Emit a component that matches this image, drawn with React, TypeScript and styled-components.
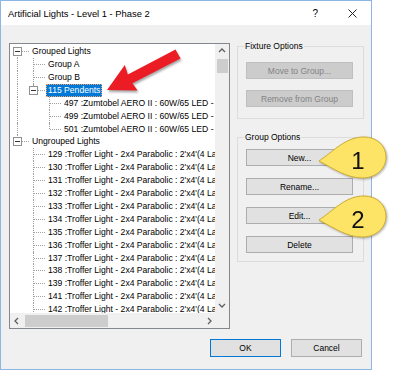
import React from 'react'
import styled, { createGlobalStyle } from 'styled-components'

const GlobalStyle = createGlobalStyle`
  html, body {
    margin: 0;
    padding: 0;
    background: #fff;
  }
  body {
    font-family: "Liberation Sans", Arial, sans-serif;
    color: #000;
  }
`

const Dialog = styled.div`
  position: relative;
  width: 372px;
  height: 370px;
  box-sizing: border-box;
  border: 1px solid #8db6e6;
  background: #f0f0f0;
  display: flex;
  flex-direction: column;
`

const TitleBar = styled.div`
  flex: none;
  height: 24px;
  background: #fff;
  display: flex;
  align-items: center;
  padding-left: 7px;
  font-size: 9.4px;
`

const TitleText = styled.span`
  flex: 1;
`

const Help = styled.span`
  font-size: 10px;
  margin-right: 30px;
`

const Close = styled.span`
  display: flex;
  margin-right: 14px;
`

const Body = styled.div`
  display: flex;
  gap: 7px;
  padding: 15px 0 0 8px;
`

const Tree = styled.div`
  margin-top: 3px;
  width: 221px;
  height: 286px;
  box-sizing: border-box;
  border: 1px solid #828790;
  background: #fff;
  display: grid;
  grid-template-columns: minmax(0, 1fr) 14px;
  grid-template-rows: minmax(0, 1fr) 15px;
`

const Rows = styled.div`
  min-height: 0;
  padding-top: 1.25px;
  overflow: hidden;
`

const Row = styled.div`
  height: 12.9px;
  display: flex;
  white-space: nowrap;
`

const Guide = styled.span<{ $up?: boolean; $down?: boolean; $right?: boolean; $wide?: boolean }>`
  position: relative;
  flex: none;
  width: ${(p) => (p.$wide ? 20 : 16)}px;

  &::before {
    content: '';
    display: ${(p) => (p.$up || p.$down ? 'block' : 'none')};
    position: absolute;
    left: 7px;
    top: ${(p) => (p.$up ? '0' : '50%')};
    bottom: ${(p) => (p.$down ? '0' : '50%')};
    border-left: 1px dotted #a0a0a0;
  }

  &::after {
    content: '';
    display: ${(p) => (p.$right ? 'block' : 'none')};
    position: absolute;
    left: 8px;
    right: 1px;
    top: 6px;
    border-top: 1px dotted #a0a0a0;
  }
`

const Expander = styled.span`
  position: absolute;
  z-index: 1;
  left: 3px;
  top: 2px;
  width: 9px;
  height: 9px;
  box-sizing: border-box;
  border: 1px solid #919191;
  background: #fff;

  &::after {
    content: '';
    position: absolute;
    left: 1px;
    right: 1px;
    top: 3px;
    border-top: 1px solid #333;
  }
`

const Label = styled.span<{ $selected?: boolean }>`
  padding: 0 2px;
  font-size: 8.6px;
  line-height: 12.9px;
  background: ${(p) => (p.$selected ? '#0078d7' : 'transparent')};
  color: ${(p) => (p.$selected ? '#fff' : '#000')};
  outline: ${(p) => (p.$selected ? '1px dotted #f3a06a' : 'none')};
  outline-offset: -1px;
`

const VScroll = styled.div`
  min-height: 0;
  background: #f0f0f0;
  display: flex;
  flex-direction: column;
`

const HScroll = styled.div`
  background: #f0f0f0;
  display: flex;
`

const Corner = styled.div`
  background: #f0f0f0;
`

const VArrow = styled.span`
  flex: none;
  height: 14px;
  display: flex;
  align-items: center;
  justify-content: center;
`

const HArrow = styled.span<{ $end?: boolean }>`
  flex: none;
  width: 14px;
  display: flex;
  align-items: center;
  justify-content: ${(p) => (p.$end ? 'flex-end' : 'center')};
  padding-right: ${(p) => (p.$end ? '1px' : '0')};
  box-sizing: border-box;
`

const VThumb = styled.div`
  flex: none;
  height: 14px;
  margin: 1px 1px 0 2px;
  background: #cdcdcd;
`

const HThumb = styled.div`
  flex: none;
  width: 83px;
  margin: 2px 0 1px 1px;
  background: #cdcdcd;
`

const Track = styled.div`
  flex: 1;
`

const Side = styled.div`
  width: 127px;
  display: flex;
  flex-direction: column;
  gap: 12px;
`

const Group = styled.fieldset<{ $top: number; $gap: number; $bottom: number }>`
  margin: 0;
  min-width: 0;
  border: 1px solid #dcdcdc;
  padding: ${(p) => p.$top}px 10px ${(p) => p.$bottom}px 8px;
  display: flex;
  flex-direction: column;
  gap: ${(p) => p.$gap}px;
`

const Legend = styled.legend`
  font-size: 8.5px;
  line-height: 13px;
  padding: 0 1px;
  margin-left: -2px;
`

const Button = styled.button<{ $primary?: boolean }>`
  height: 17px;
  box-sizing: border-box;
  padding: 0;
  border: 1px solid ${(p) => (p.$primary ? '#0078d7' : '#adadad')};
  background: #e1e1e1;
  font-family: "Liberation Sans", Arial, sans-serif;
  font-size: 8.5px;
  color: #000;

  &:disabled {
    background: #cccccc;
    border-color: #bfbfbf;
    color: #838383;
  }
`

const Footer = styled.div`
  display: flex;
  justify-content: flex-end;
  gap: 10px;
  padding: 10px 9px 0 0;
`

const FooterButton = styled(Button)`
  width: 71px;
  height: 18px;
`

const Pointer = styled.svg`
  position: absolute;
  left: 99px;
  top: 42px;
  filter: drop-shadow(1px 2px 1px rgba(0, 0, 0, 0.35));
`

const Callout = styled.svg<{ $top: number }>`
  position: absolute;
  left: 313px;
  top: ${(p) => p.$top}px;
  filter: drop-shadow(1px 1px 1px rgba(0, 0, 0, 0.3));
`

type Cell = { up?: boolean; down?: boolean; right?: boolean; box?: boolean }
type Item = { cells: Cell[]; text: string; selected?: boolean }

const pipe: Cell = { up: true, down: true }
const blank: Cell = {}
const tee: Cell = { up: true, down: true, right: true }
const elbow: Cell = { up: true, right: true }

const troffer = [129, 130, 131, 132, 133, 134, 135, 136, 137, 138, 139, 141, 142]

const items: Item[] = [
  { cells: [{ down: true, right: true, box: true }], text: 'Grouped Lights' },
  { cells: [pipe, tee], text: 'Group A' },
  { cells: [pipe, tee], text: 'Group B' },
  { cells: [pipe, { up: true, right: true, box: true }], text: '115 Pendents', selected: true },
  { cells: [pipe, blank, tee], text: '497 :Zumtobel AERO II : 60W/65 LED -' },
  { cells: [pipe, blank, tee], text: '499 :Zumtobel AERO II : 60W/65 LED -' },
  { cells: [pipe, blank, elbow], text: '501 :Zumtobel AERO II : 60W/65 LED -' },
  { cells: [{ up: true, right: true, box: true }], text: 'Ungrouped Lights' },
  ...troffer.map((n) => ({
    cells: [blank, tee],
    text: `${n} :Troffer Light - 2x4 Parabolic : 2'x4'(4 La`,
  })),
]

const Chevron = ({ dir }: { dir: 'up' | 'down' | 'left' | 'right' }) => {
  const d = {
    up: 'M1 5 L4 2 L7 5',
    down: 'M1 2 L4 5 L7 2',
    left: 'M5 1 L2 4 L5 7',
    right: 'M2 1 L5 4 L2 7',
  }[dir]
  return (
    <svg width="8" height="8" viewBox="0 0 8 8">
      <path d={d} fill="none" stroke="#606060" strokeWidth="1.3" />
    </svg>
  )
}

// teardrop pointing left, bulb on the right
const calloutPath = 'M5 29 C19 20 31 5 50 5 C63 5 72 14 72 25 C72 37 62 46 48 46 C33 46 20 37 5 29 Z'

const Bubble = ({ top, label }: { top: number; label: string }) => (
  <Callout $top={top} width="78" height="54" viewBox="0 0 78 54">
    <path d={calloutPath} fill="#fde467" stroke="#cfac2e" strokeWidth="1" />
    <text
      x="44"
      y="37"
      textAnchor="middle"
      fontFamily='"Liberation Sans", Arial, sans-serif'
      fontSize="24"
      fill="#111"
    >
      {label}
    </text>
  </Callout>
)

const App = () => {
  return (
    <>
      <GlobalStyle />
      <Dialog>
        <TitleBar>
          <TitleText>Artificial Lights - Level 1 - Phase 2</TitleText>
          <Help>?</Help>
          <Close>
            <svg width="9" height="9" viewBox="0 0 9 9">
              <path d="M0.5 0.5 L8.5 8.5 M8.5 0.5 L0.5 8.5" stroke="#222" strokeWidth="1" />
            </svg>
          </Close>
        </TitleBar>
        <Body>
          <Tree>
            <Rows>
              {items.map((item, i) => (
                <Row key={i}>
                  {item.cells.map((c, j) => (
                    <Guide
                      key={j}
                      $up={c.up}
                      $down={c.down}
                      $right={c.right}
                      $wide={j === item.cells.length - 1}
                    >
                      {c.box && <Expander />}
                    </Guide>
                  ))}
                  <Label $selected={item.selected}>{item.text}</Label>
                </Row>
              ))}
            </Rows>
            <VScroll>
              <VArrow>
                <Chevron dir="up" />
              </VArrow>
              <VThumb />
              <Track />
              <VArrow>
                <Chevron dir="down" />
              </VArrow>
            </VScroll>
            <HScroll>
              <HArrow>
                <Chevron dir="left" />
              </HArrow>
              <HThumb />
              <Track />
              <HArrow $end>
                <Chevron dir="right" />
              </HArrow>
            </HScroll>
            <Corner />
          </Tree>
          <Side>
            <Group $top={9} $gap={11} $bottom={11}>
              <Legend>Fixture Options</Legend>
              <Button disabled>Move to Group...</Button>
              <Button disabled>Remove from Group</Button>
            </Group>
            <Group $top={5} $gap={12} $bottom={8}>
              <Legend>Group Options</Legend>
              <Button>New...</Button>
              <Button>Rename...</Button>
              <Button>Edit...</Button>
              <Button>Delete</Button>
            </Group>
          </Side>
        </Body>
        <Footer>
          <FooterButton $primary>OK</FooterButton>
          <FooterButton>Cancel</FooterButton>
        </Footer>
        <Pointer width="86" height="56" viewBox="99 42 86 56">
          <polygon
            points="174.5,48.5 126.8,73.4 123.8,64.1 106,89 136.6,89.6 131.4,82.3 179.5,57.5"
            fill="#ec1c24"
          />
        </Pointer>
        <Bubble top={131} label="1" />
        <Bubble top={190} label="2" />
      </Dialog>
    </>
  )
}

export default App
